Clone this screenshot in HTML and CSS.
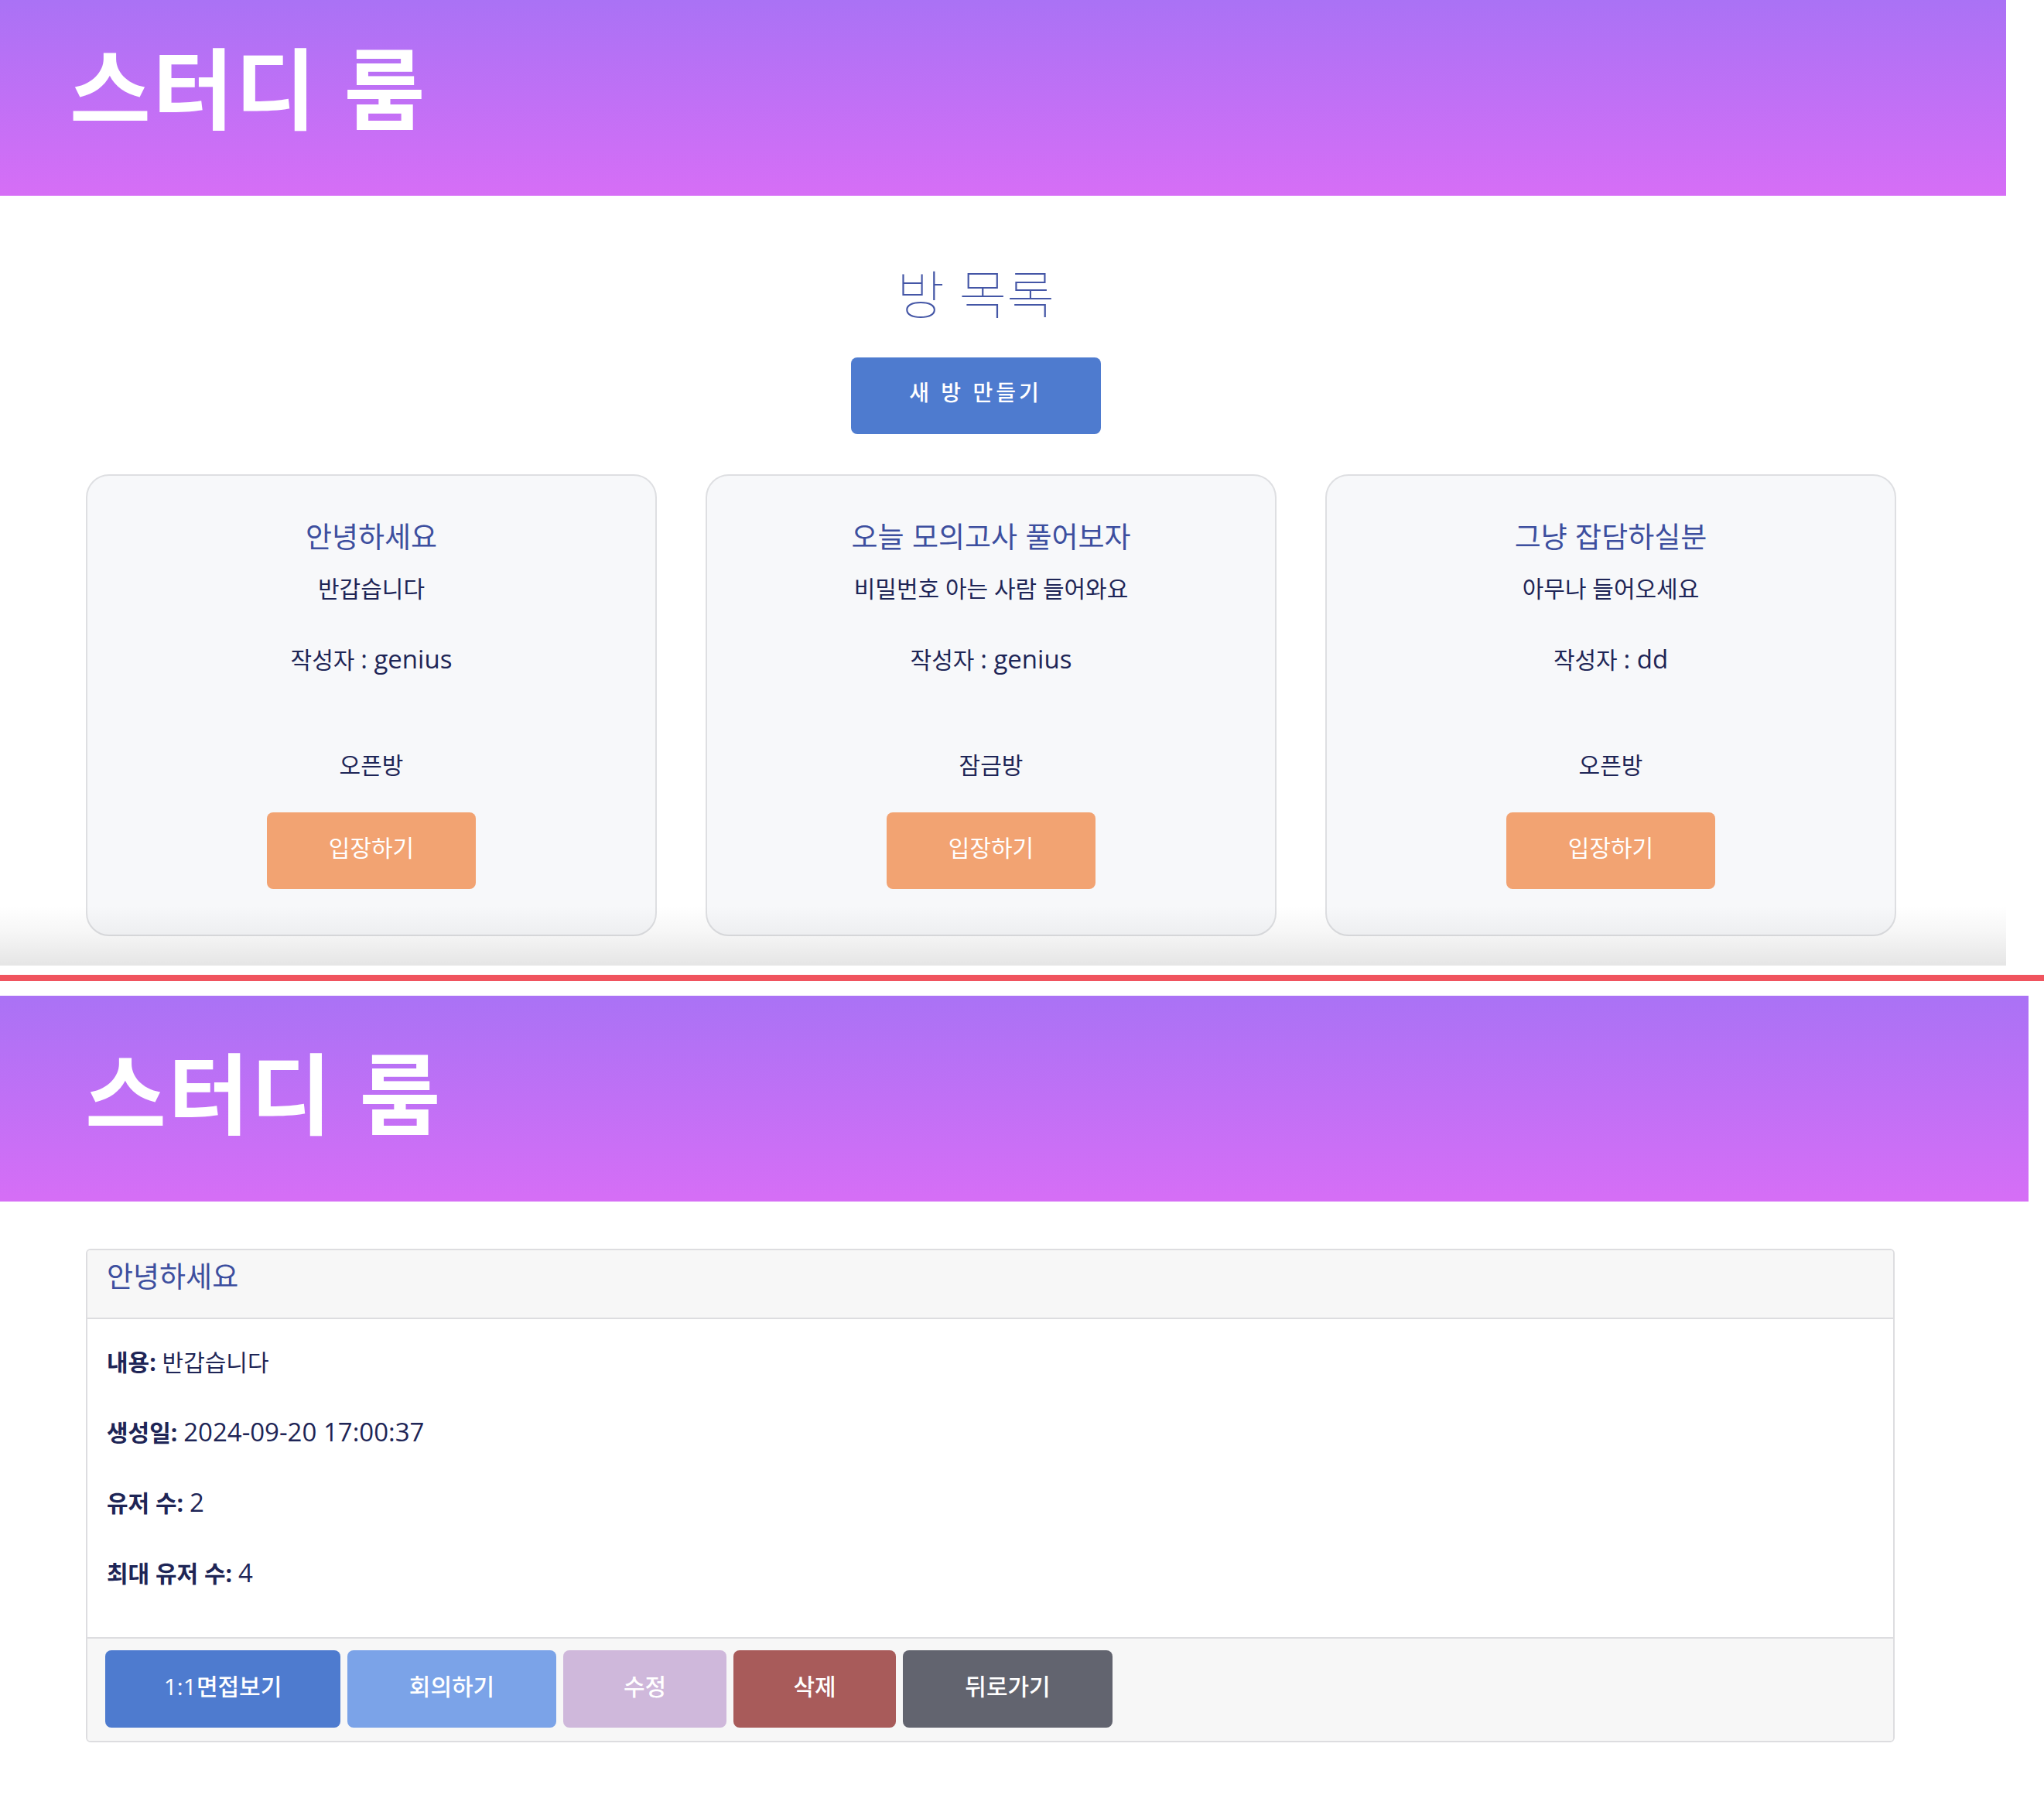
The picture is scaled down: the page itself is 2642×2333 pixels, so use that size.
FILE: index.html
```html
<!DOCTYPE html>
<html lang="ko">
<head>
<meta charset="utf-8">
<title>스터디 룸</title>
<link rel="stylesheet" href="styles.css">
</head>
<body>
<section class="shot shot-a">
  <header class="banner banner-a"><h1 class="banner-title">스터디 룸</h1></header>
  <main class="list">
    <div class="list-head">
      <h2 class="list-title">방 목록</h2>
      <button class="btn btn-new">새 방 만들기</button>
    </div>
    <div class="cards">
      <div class="room">
        <h3 class="room-title">안녕하세요</h3>
        <p class="room-desc">반갑습니다</p>
        <p class="room-author">작성자 <span class="latin">: genius</span></p>
        <p class="room-type">오픈방</p>
        <button class="btn btn-enter">입장하기</button>
      </div>
      <div class="room">
        <h3 class="room-title">오늘 모의고사 풀어보자</h3>
        <p class="room-desc">비밀번호 아는 사람 들어와요</p>
        <p class="room-author">작성자 <span class="latin">: genius</span></p>
        <p class="room-type">잠금방</p>
        <button class="btn btn-enter">입장하기</button>
      </div>
      <div class="room">
        <h3 class="room-title">그냥 잡담하실분</h3>
        <p class="room-desc">아무나 들어오세요</p>
        <p class="room-author">작성자 <span class="latin">: dd</span></p>
        <p class="room-type">오픈방</p>
        <button class="btn btn-enter">입장하기</button>
      </div>
    </div>
  </main>
  <div class="fade"></div>
</section>
<div class="divider"></div>
<section class="shot shot-b">
  <header class="banner banner-b"><h1 class="banner-title">스터디 룸</h1></header>
  <div class="detail">
    <div class="detail-head"><h3 class="detail-title">안녕하세요</h3></div>
    <div class="detail-body">
      <p><strong>내용:</strong> 반갑습니다</p>
      <p><strong>생성일:</strong> <span class="latin">2024-09-20 17:00:37</span></p>
      <p><strong>유저 수:</strong> <span class="latin">2</span></p>
      <p><strong>최대 유저 수:</strong> <span class="latin">4</span></p>
    </div>
    <div class="detail-foot">
      <button class="btn act act-interview">1:1면접보기</button>
      <button class="btn act act-meeting">회의하기</button>
      <button class="btn act act-edit">수정</button>
      <button class="btn act act-delete">삭제</button>
      <button class="btn act act-back">뒤로가기</button>
    </div>
  </div>
</section>
</body>
</html>
```

FILE: styles.css
```css
* { box-sizing: border-box; }
html, body { margin: 0; padding: 0; background: #ffffff; }
body {
  width: 2642px;
  font-family: "Open Sans", "Noto Sans CJK KR", sans-serif;
  color: #1e2556;
}
h1, h2, h3, p { margin: 0; font-weight: normal; }
.latin { font-size: 33px; }
.btn {
  font-family: "Open Sans", "Noto Sans CJK KR", sans-serif;
  border: none;
  color: #ffffff;
  cursor: pointer;
  display: block;
  padding: 0 0 8px;
}

.shot { position: relative; overflow: hidden; }
.shot-a { width: 2593px; height: 1248px; }
.shot-b { width: 2642px; height: 1046px; }

.banner {
  background: linear-gradient(180deg, #aa72f5 0%, #d66ef6 100%);
}
.banner-a { height: 253px; padding: 52px 0 0 90px; }
.banner-b { width: 2622px; height: 266px; padding: 64px 0 0 110px; }
.banner-title {
  font-family: "Noto Sans CJK KR", sans-serif;
  font-weight: 700;
  font-size: 114px;
  line-height: 1;
  color: #ffffff;
  font-feature-settings: "palt";
  letter-spacing: 2px;
}

.list { padding: 0 0 0 111px; }
.list-head {
  width: 2300px;
  display: flex;
  flex-direction: column;
  align-items: center;
}
.list-title {
  margin-top: 84px;
  font-family: "Noto Sans CJK KR", sans-serif;
  font-weight: 100;
  font-size: 67px;
  line-height: 80px;
  color: #4456a6;
  font-feature-settings: "palt";
}
.btn-new {
  margin-top: 45px;
  width: 323px;
  height: 99px;
  border-radius: 8px;
  background: #4e7bcf;
  font-size: 28px;
  font-weight: 500;
  letter-spacing: 4px;
  padding-bottom: 12px;
}

.cards {
  margin-top: 52px;
  display: flex;
  gap: 63px;
}
.room {
  width: 738px;
  height: 597px;
  background: #f7f8fa;
  border: 2px solid #dedfe2;
  border-radius: 30px;
  padding-top: 55px;
  display: flex;
  flex-direction: column;
  align-items: center;
  text-align: center;
}
.room-title {
  font-family: "Noto Sans CJK KR", sans-serif;
  font-size: 37px;
  line-height: 44px;
  color: #3d4f9f;
  font-feature-settings: "palt";
}
.room-desc, .room-author, .room-type {
  font-size: 30px;
  line-height: 44px;
  font-feature-settings: "palt";
}
.room-desc { margin-top: 25px; }
.room-author { margin-top: 47px; }
.room-type { margin-top: 92px; }
.btn-enter {
  margin-top: 39px;
  width: 270px;
  height: 99px;
  border-radius: 8px;
  background: #f2a372;
  font-size: 30px;
  padding-bottom: 12px;
}

.fade {
  position: absolute;
  left: 0;
  right: 0;
  bottom: 0;
  height: 78px;
  background: linear-gradient(180deg, rgba(0,0,0,0) 0%, rgba(0,0,0,0.035) 45%, rgba(0,0,0,0.1) 100%);
  pointer-events: none;
}

.divider {
  margin: 12px 0 19px;
  height: 8px;
  width: 2642px;
  background: #f0545e;
}

.detail {
  margin: 61px 0 0 111px;
  width: 2338px;
  border: 2px solid #dddde0;
  border-radius: 6px;
  overflow: hidden;
}
.detail-head {
  height: 89px;
  background: #f7f7f7;
  border-bottom: 2px solid #dddde0;
  padding: 7px 25px 0;
}
.detail-title {
  font-family: "Noto Sans CJK KR", sans-serif;
  font-size: 37px;
  line-height: 50px;
  color: #3d4f9f;
  font-feature-settings: "palt";
}
.detail-body { padding: 34px 25px 17px; height: 411px; }
.detail-body p {
  font-size: 30px;
  line-height: 44px;
  margin-bottom: 46px;
  font-feature-settings: "palt";
}
.detail-body strong { font-weight: 700; }
.detail-foot {
  background: #f7f7f7;
  border-top: 2px solid #dddde0;
  padding: 15px 23px 17px;
  display: flex;
  gap: 9px;
}
.act {
  height: 100px;
  border-radius: 8px;
  font-size: 30px;
  font-weight: 500;
  padding-bottom: 10px;
}
.act-interview { width: 304px; background: #4e7bcf; }
.act-meeting { width: 270px; background: #7ba3e8; }
.act-edit { width: 211px; background: #cfb8db; }
.act-delete { width: 210px; background: #a85b5a; }
.act-back { width: 271px; background: #62646f; }
```
